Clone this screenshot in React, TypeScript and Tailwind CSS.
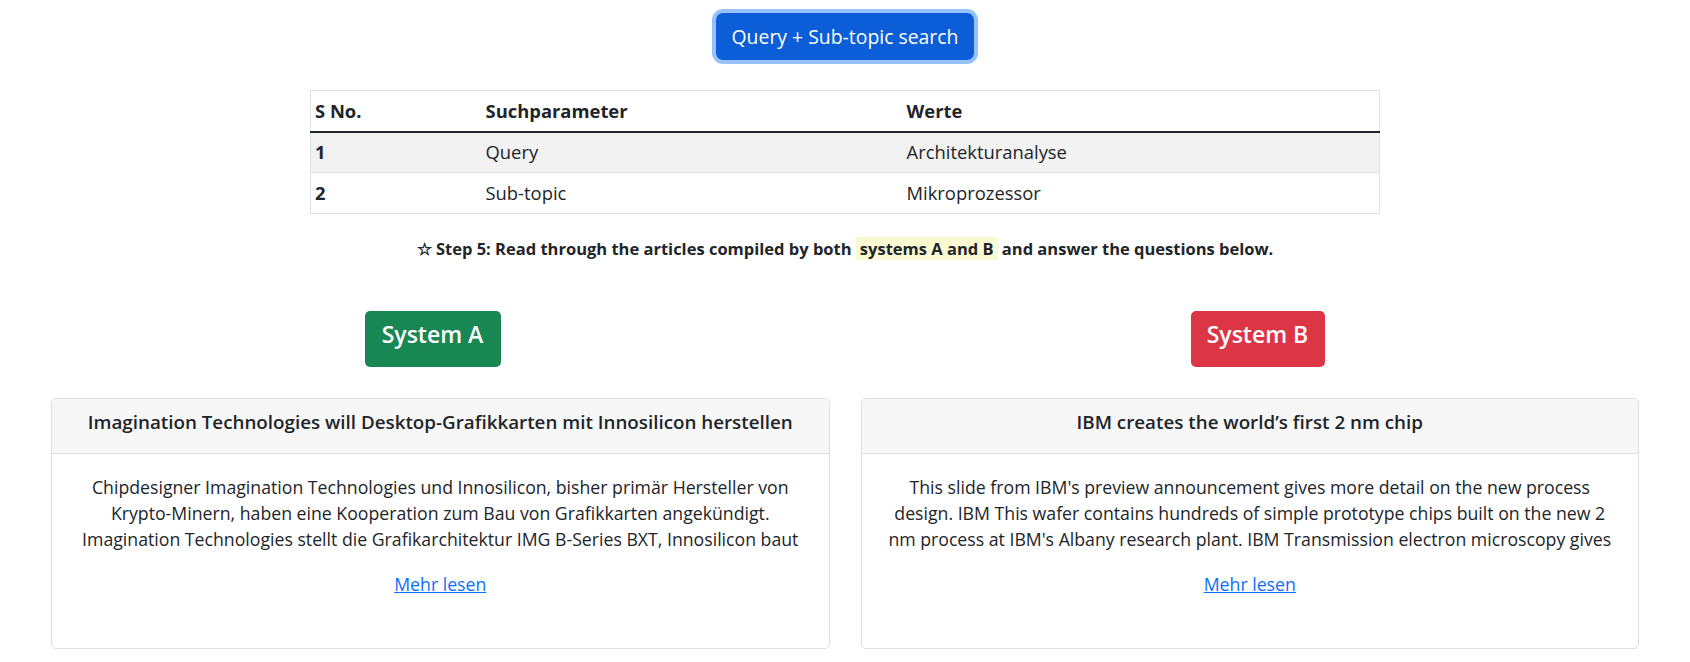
import React from "react";

const rows = [
  { no: "1", param: "Query", value: "Architekturanalyse" },
  { no: "2", param: "Sub-topic", value: "Mikroprozessor" },
];

const articles = [
  {
    title: "Imagination Technologies will Desktop-Grafikkarten mit Innosilicon herstellen",
    lines: [
      "Chipdesigner Imagination Technologies und Innosilicon, bisher primär Hersteller von",
      "Krypto-Minern, haben eine Kooperation zum Bau von Grafikkarten angekündigt.",
      "Imagination Technologies stellt die Grafikarchitektur IMG B-Series BXT, Innosilicon baut",
    ],
  },
  {
    title: "IBM creates the world’s first 2 nm chip",
    lines: [
      "This slide from IBM's preview announcement gives more detail on the new process",
      "design. IBM This wafer contains hundreds of simple prototype chips built on the new 2",
      "nm process at IBM's Albany research plant. IBM Transmission electron microscopy gives",
    ],
  },
];

function ArticleCard({ title, lines }: { title: string; lines: string[] }) {
  return (
    <div className="h-[251px] rounded-[5px] border border-[#dfdfdf] bg-white overflow-hidden">
      <div className="h-[55px] pb-[8px] flex items-center justify-center bg-[#f7f7f7] border-b border-[#dfdfdf] text-[18.8px] font-semibold text-[#212529]">
        {title}
      </div>
      <div className="pt-[20px] px-[20px] text-center text-[17.7px] leading-[26px] text-[#212529]">
        {lines.map((l) => (
          <div key={l} className="whitespace-nowrap">{l}</div>
        ))}
        <a href="#" className="inline-block mt-[19px] text-[#0d6efd] underline">
          Mehr lesen
        </a>
      </div>
    </div>
  );
}

export default function App() {
  return (
    <div className="w-[1690px] h-[662px] bg-white overflow-hidden text-[#212529] font-['Open_Sans',sans-serif]">
      <div className="flex justify-center pt-[13px]">
        <button className="h-[47px] px-[16px] rounded-[7px] bg-[#0b5ed7] text-white text-[19.4px] ring-4 ring-[#98c1fb]">
          Query + Sub-topic search
        </button>
      </div>

      {/* Suchparameter */}
      <div className="flex justify-center mt-[30px]">
        <table className="w-[1070px] table-fixed border border-[#dee2e6] text-[18.4px] border-collapse">
          <thead>
            <tr className="h-[41px] border-b-2 border-[#212529]">
              <th className="w-[171px] pl-[4px] text-left font-bold">S No.</th>
              <th className="w-[421px] pl-[4px] text-left font-bold">Suchparameter</th>
              <th className="pl-[4px] text-left font-bold">Werte</th>
            </tr>
          </thead>
          <tbody>
            {rows.map((r, i) => (
              <tr key={r.no} className={"h-[41px] border-b border-[#dee2e6] " + (i === 0 ? "bg-[#f2f2f2]" : "bg-white")}>
                <td className="pl-[4px] font-bold">{r.no}</td>
                <td className="pl-[4px]">{r.param}</td>
                <td className="pl-[4px]">{r.value}</td>
              </tr>
            ))}
          </tbody>
        </table>
      </div>

      <p className="mt-[24px] text-center text-[16.5px] font-bold leading-[22px]">
        ☆ Step 5: Read through the articles compiled by both{" "}
        <span className="bg-[#fafad2] px-[4px]">systems A and B</span> and answer the questions below.
      </p>

      <div className="grid grid-cols-2 px-[20px] mt-[51px]">
        <div className="flex justify-center">
          <span className="h-[56px] w-[136px] pb-[9px] flex items-center justify-center rounded-[5px] bg-[#198754] text-white text-[23px] font-semibold">
            System A
          </span>
        </div>
        <div className="flex justify-center">
          <span className="h-[56px] w-[134px] pb-[9px] flex items-center justify-center rounded-[5px] bg-[#dc3545] text-white text-[23px] font-semibold">
            System B
          </span>
        </div>
      </div>

      <div className="grid grid-cols-2 gap-[31px] px-[51px] mt-[31px]">
        {articles.map((a) => (
          <ArticleCard key={a.title} title={a.title} lines={a.lines} />
        ))}
      </div>
    </div>
  );
}
